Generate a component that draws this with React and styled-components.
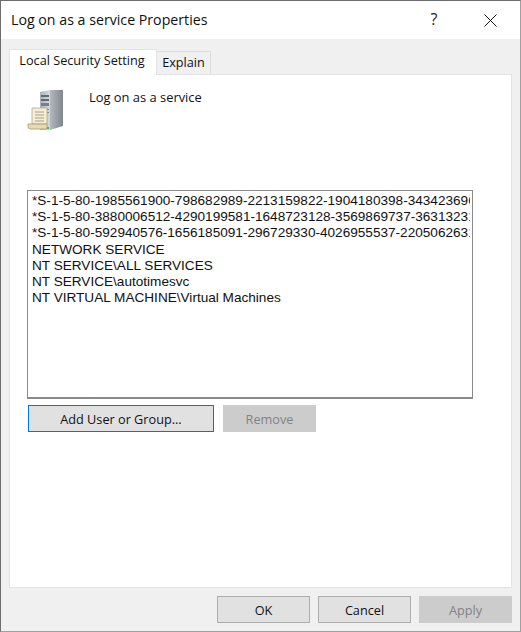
import React from 'react';
import styled, { createGlobalStyle } from 'styled-components';

const GlobalStyle = createGlobalStyle`
  html, body {
    margin: 0;
    padding: 0;
    background: #f0f0f0;
  }
  * {
    box-sizing: border-box;
  }
`;

const Dialog = styled.div`
  width: 521px;
  height: 632px;
  display: flex;
  flex-direction: column;
  background: #f0f0f0;
  border-top: 1px solid #6d6d6d;
  border-left: 1px solid #6d6d6d;
  border-right: 1px solid #a0a0a0;
  border-bottom: 1px solid #a0a0a0;
  font-family: "Liberation Sans", Arial, sans-serif;
  color: #000;
  overflow: hidden;
`;

const TitleBar = styled.div`
  height: 38px;
  flex: none;
  display: flex;
  align-items: center;
  background: #fff;
  padding-left: 10px;
`;

const Title = styled.div`
  flex: 1;
  font-family: "Open Sans", sans-serif;
  font-size: 14.2px;
  color: #111;
  padding-bottom: 2px;
`;

const HelpGlyph = styled.div`
  width: 46px;
  text-align: center;
  font-family: "Open Sans", sans-serif;
  font-size: 16px;
  color: #222;
  margin-right: 10px;
  padding-bottom: 2px;
`;

const CloseBox = styled.div`
  width: 46px;
  margin-right: 7px;
  display: flex;
  justify-content: center;
  align-items: center;
`;

const Body = styled.div`
  flex: 1;
  display: flex;
  flex-direction: column;
  padding: 9px 8px 0 8px;
  min-height: 0;
`;

const TabRow = styled.div`
  display: flex;
  align-items: flex-end;
  height: 26px;
  flex: none;
  position: relative;
  z-index: 1;
`;

const Tab = styled.div`
  display: flex;
  align-items: center;
  justify-content: center;
  font-family: "Open Sans", sans-serif;
  font-size: 12.7px;
  color: #111;
  ${(p) =>
    p.$active
      ? `
    width: 148px;
    height: 26px;
    background: #fff;
    border: 1px solid #e3e3e3;
    border-bottom: none;
    padding: 0 2px 6px 0;
    margin-bottom: -1px;
  `
      : `
    width: 54px;
    height: 23px;
    background: #f0f0f0;
    border: 1px solid #dcdcdc;
    border-left: none;
    border-bottom: none;
    padding-bottom: 3px;
  `}
`;

const Panel = styled.div`
  flex: 1;
  display: flex;
  flex-direction: column;
  background: #fff;
  border: 1px solid #e3e3e3;
  padding: 12px 38px 0 17px;
  min-height: 0;
`;

const Header = styled.div`
  display: flex;
  height: 103px;
  flex: none;
`;

const ServerIcon = styled.svg`
  width: 38px;
  height: 46px;
  flex: none;
  margin-top: 2px;
`;

const PolicyName = styled.div`
  font-family: "Open Sans", sans-serif;
  font-size: 12.9px;
  color: #111;
  margin-left: 24px;
  margin-top: 1px;
`;

const AccountList = styled.div`
  height: 209px;
  flex: none;
  border: 1px solid #8a8a8a;
  border-bottom-width: 2px;
  padding: 2px 2px 0 4px;
  overflow: hidden;
`;

const AccountRow = styled.div`
  height: 16.2px;
  line-height: 16.2px;
  font-size: 13.6px;
  white-space: nowrap;
  overflow: hidden;
  color: #111;
`;

const ButtonRow = styled.div`
  display: flex;
  gap: ${(p) => p.$gap}px;
  flex: none;
`;

const ListButtons = styled(ButtonRow)`
  margin-top: 6px;
  padding-left: 1px;
`;

const Footer = styled(ButtonRow)`
  height: 43px;
  justify-content: flex-end;
  align-items: flex-start;
  padding-top: 8px;
`;

const Button = styled.button`
  width: ${(p) => p.$width || 93}px;
  height: 27px;
  padding: 0;
  font-family: "Open Sans", sans-serif;
  font-size: 12.7px;
  background: ${(p) => (p.disabled ? '#cccccc' : '#e1e1e1')};
  color: ${(p) => (p.disabled ? '#838383' : '#111')};
  border: 1px solid ${(p) => (p.disabled ? '#cccccc' : p.$focused ? '#0078d7' : '#adadad')};
  box-shadow: ${(p) => (p.$focused ? 'inset 0 0 0 1px #e1e1e1' : 'none')};
`;

const accounts = [
  '*S-1-5-80-1985561900-798682989-2213159822-1904180398-3434236966',
  '*S-1-5-80-3880006512-4290199581-1648723128-3569869737-3631323133',
  '*S-1-5-80-592940576-1656185091-296729330-4026955537-2205062631',
  'NETWORK SERVICE',
  'NT SERVICE\\ALL SERVICES',
  'NT SERVICE\\autotimesvc',
  'NT VIRTUAL MACHINE\\Virtual Machines',
];

const Server = () => (
  <ServerIcon viewBox="0 0 38 46">
    <defs>
      <linearGradient id="front" x1="0" x2="1" y1="0" y2="0">
        <stop offset="0" stopColor="#aab2b9" />
        <stop offset="1" stopColor="#d5dade" />
      </linearGradient>
      <linearGradient id="side" x1="0" x2="1" y1="0" y2="0">
        <stop offset="0" stopColor="#b4b9be" />
        <stop offset="1" stopColor="#80868c" />
      </linearGradient>
    </defs>
    <polygon points="13,3 23,1 23,41 13,41" fill="url(#front)" />
    <polygon points="23,1 36,1 36,37 23,41" fill="url(#side)" />
    <rect x="14" y="6" width="8" height="2" fill="#5f6a74" />
    <rect x="14" y="10" width="8" height="2" fill="#5f6a74" />
    <rect x="14" y="14" width="8" height="3" fill="#76808a" />
    <rect x="14" y="20" width="8" height="1" fill="#7d868e" />
    <rect x="14" y="23" width="8" height="1" fill="#7d868e" />
    <rect x="19" y="38" width="3" height="2" fill="#35c24a" />
    <path d="M5 19 H20 V35 H5 Z" fill="#f6edd6" stroke="#b0a88e" strokeWidth="0.8" />
    <path d="M8 23 H17 M8 26 H17 M8 29 H17 M8 32 H17" stroke="#a8a08a" strokeWidth="1" />
    <path d="M1 35 H20 V40 H3 Q1 40 1 37 Z" fill="#e8d9b0" stroke="#a49a7c" strokeWidth="0.8" />
  </ServerIcon>
);

const App = () => (
  <>
    <GlobalStyle />
    <Dialog>
      <TitleBar>
        <Title>Log on as a service Properties</Title>
        <HelpGlyph>?</HelpGlyph>
        <CloseBox>
          <svg width="13" height="13" viewBox="0 0 13 13">
            <path d="M0.5 0.5 L12.5 12.5 M12.5 0.5 L0.5 12.5" stroke="#111" strokeWidth="1" fill="none" />
          </svg>
        </CloseBox>
      </TitleBar>
      <Body>
        <TabRow>
          <Tab $active>Local Security Setting</Tab>
          <Tab>Explain</Tab>
        </TabRow>
        <Panel>
          <Header>
            <Server />
            <PolicyName>Log on as a service</PolicyName>
          </Header>
          <AccountList>
            {accounts.map((name) => (
              <AccountRow key={name}>{name}</AccountRow>
            ))}
          </AccountList>
          <ListButtons $gap={9}>
            <Button $width={186} $focused>Add User or Group...</Button>
            <Button disabled>Remove</Button>
          </ListButtons>
        </Panel>
        <Footer $gap={8}>
          <Button>OK</Button>
          <Button>Cancel</Button>
          <Button disabled>Apply</Button>
        </Footer>
      </Body>
    </Dialog>
  </>
);

export default App;
